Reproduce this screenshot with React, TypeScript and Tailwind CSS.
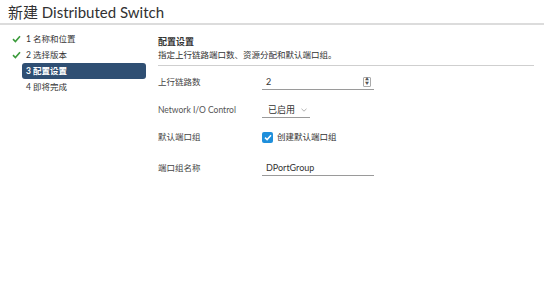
import React from "react";

const font = { fontFamily: "Lato, 'Noto Sans CJK SC', sans-serif" };

const steps = [
  { label: "1 名称和位置", done: true },
  { label: "2 选择版本", done: true },
  { label: "3 配置设置", active: true },
  { label: "4 即将完成" },
];

const Check = () => (
  <svg width="9" height="8" viewBox="0 0 9 8" className="shrink-0">
    <path d="M1 4.2 L3.4 6.5 L8 1.2" fill="none" stroke="#3b9b3b" strokeWidth="1.6" />
  </svg>
);

export default function App() {
  return (
    <div className="w-[554px] h-[289px] bg-white text-[#333]" style={font}>
      {/* header */}
      <div className="pl-[8px] pt-[3px] w-[544px] border-b-2 border-[#dcdcdc] h-[25px]">
        <h1 className="text-[15px] leading-[19px] text-[#313131]">新建 Distributed Switch</h1>
      </div>

      <div className="flex">
        {/* wizard steps */}
        <nav className="w-[158px] pt-[6px] pl-[12px] flex flex-col">
          {steps.map((s) => (
            <div
              key={s.label}
              className={`h-[16px] flex items-center text-[8.5px] ${
                s.active
                  ? "bg-[#2f4f73] text-white font-bold rounded-[3px] ml-[10px] w-[124px] pl-[4px]"
                  : "text-[#333]"
              }`}
            >
              {s.done ? <Check /> : !s.active && <span className="w-[9px]" />}
              <span className={s.active ? "" : "ml-[5px]"}>{s.label}</span>
            </div>
          ))}
        </nav>

        {/* content */}
        <main className="flex-1 pt-[11px] pr-[20px]">
          <div className="border-b border-[#cfcfcf] pb-[3px]">
            <div className="text-[9px] leading-[12px] font-bold text-[#333]">配置设置</div>
            <div className="text-[8.5px] leading-[13px] mt-[1px] text-[#333]">指定上行链路端口数、资源分配和默认端口组。</div>
          </div>

          <div className="flex items-center mt-[7px] h-[18px]">
            <label className="w-[104px] text-[8.5px] text-[#444]">上行链路数</label>
            <div className="w-[112px] h-[16px] border-b border-[#9a9a9a] flex items-center justify-between pl-[4px] pr-[3px]">
              <span className="text-[9px]">2</span>
              <span className="w-[8px] h-[10px] border border-[#aaa] rounded-[1px] flex flex-col items-center justify-center text-[4px] leading-[4px] text-[#555]">
                <span>▲</span>
                <span>▼</span>
              </span>
            </div>
          </div>

          <div className="flex items-center mt-[10px] h-[18px]">
            <label className="w-[104px] text-[8.5px] text-[#555]">Network I/O Control</label>
            <div className="w-[48px] h-[16px] border-b border-[#9a9a9a] flex items-center pl-[6px] gap-[6px]">
              <span className="text-[9px] text-[#333]">已启用</span>
              <svg width="6" height="4" viewBox="0 0 6 4">
                <path d="M0.5 0.8 L3 3.2 L5.5 0.8" fill="none" stroke="#9a9a9a" strokeWidth="0.8" />
              </svg>
            </div>
          </div>

          <div className="flex items-center mt-[9px] h-[18px]">
            <label className="w-[104px] text-[8.5px] text-[#444]">默认端口组</label>
            <div className="flex items-center gap-[4px]">
              <span className="w-[11px] h-[11px] rounded-[2px] bg-[#1f8fdb] flex items-center justify-center">
                <svg width="8" height="7" viewBox="0 0 8 7">
                  <path d="M1 3.6 L3.1 5.6 L7 1.3" fill="none" stroke="white" strokeWidth="1.5" />
                </svg>
              </span>
              <span className="text-[8.5px] text-[#333]">创建默认端口组</span>
            </div>
          </div>

          <div className="flex items-center mt-[13px] h-[18px]">
            <label className="w-[104px] text-[8.5px] text-[#444]">端口组名称</label>
            <div className="w-[112px] h-[16px] border-b border-[#9a9a9a] flex items-center pl-[4px]">
              <span className="text-[9px] text-[#333]">DPortGroup</span>
            </div>
          </div>
        </main>
      </div>
    </div>
  );
}
